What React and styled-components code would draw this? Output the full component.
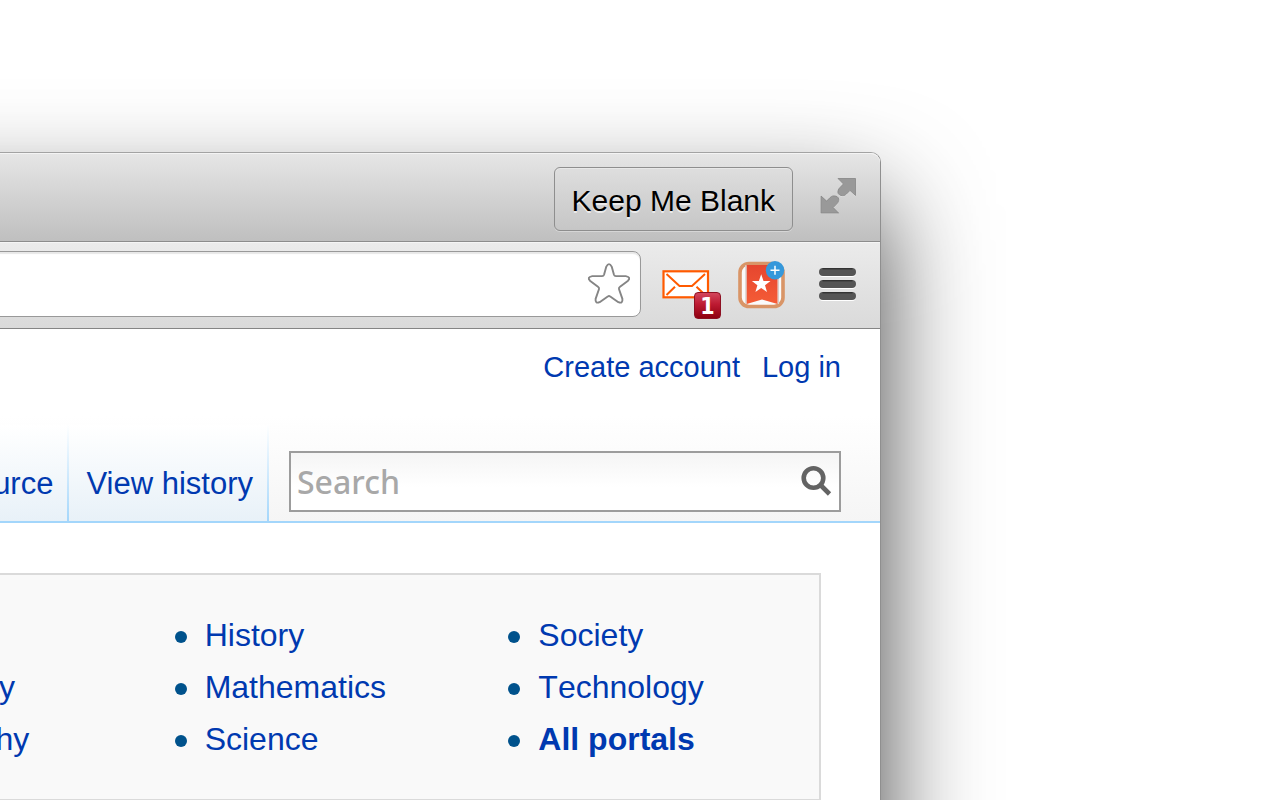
import React, { useState } from 'react'
import styled, { createGlobalStyle } from 'styled-components'

const GlobalStyle = createGlobalStyle`
    * { box-sizing: border-box; }
    body {
        margin: 0;
        background: #fff;
        font-family: "Liberation Sans", Arial, sans-serif;
    }
`
const Page = styled.div`
    display: flex;
    flex-direction: column;
    height: 100vh;
    padding-top: 152px;
    overflow: hidden;
`
// the window runs off the left and bottom edges of the page
const Window = styled.div`
    flex: 1 0 auto;
    margin: 0 399px -200px -224px;
    border: 1px solid #8f8f8f;
    border-top-color: #a3a3a3;
    border-radius: 10px 10px 0 0;
    background: #fff;
    box-shadow: 0 52px 104px rgba(0, 0, 0, 0.74);
`
const TitleBar = styled.header`
    display: flex;
    justify-content: flex-end;
    gap: 21px;
    height: 89px;
    padding: 14px 18px 0 0;
    border-bottom: 1px solid #8c8c8c;
    border-radius: 9px 9px 0 0;
    background: linear-gradient(#e6e6e6, #bfbfbf);
    box-shadow: inset 0 1px 0 #f4f4f4;
`
const TitleButton = styled.button`
    height: 64px;
    padding: 4px 17px 0;
    border: 1px solid #8e8e8e;
    border-radius: 6px;
    background: linear-gradient(#dedede, #c6c6c6);
    box-shadow: inset 0 1px 0 #e8e8e8, 0 1px 0 #d6d6d6;
    color: #000;
    font-family: inherit;
    font-size: 30px;
    text-shadow: 0 2px 0 rgba(255, 255, 255, 0.6);
`
const IconButton = styled.button`
    position: relative;
    width: 48px;
    height: 56px;
    padding: 0;
    border: 0;
    background: none;
    svg { display: block; width: 48px; height: 56px; }
`
const Toolbar = styled.div`
    display: flex;
    align-items: center;
    gap: 21px;
    height: 87px;
    padding: 0 18px 3px 0;
    border-bottom: 1px solid #858585;
    background: linear-gradient(#ebebeb, #dadada);
    box-shadow: inset 0 1px 0 #f5f5f5;
`
const Omnibox = styled.div`
    flex: 1;
    display: flex;
    align-items: center;
    height: 66px;
    padding-right: 9px;
    border: 1px solid #999;
    border-radius: 8px;
    background: #fff;
    box-shadow: inset 0 2px 1px #e8e8e8;
`
const Address = styled.input`
    flex: 1;
    border: 0;
    outline: none;
    background: none;
    font-size: 30px;
`
const Extensions = styled.div`
    display: flex;
    gap: 28px;
`
const Badge = styled.span`
    position: absolute;
    left: 32px;
    top: 36px;
    width: 27px;
    height: 27px;
    border: 1px solid #8d1022;
    border-radius: 4px;
    background: linear-gradient(#d2465c, #bd1a32 45%, #8f0010);
    color: #fff;
    font: bold 23px/26px "DejaVu Sans Condensed", "Noto Sans", sans-serif;
    text-align: center;
`
const SiteHead = styled.div`
    padding-top: 20px;
    border-bottom: 2px solid #a3d6fb;
    background: linear-gradient(#fff 45%, #f5f5f5);
`
const Account = styled.nav`
    display: flex;
    justify-content: flex-end;
    gap: 22px;
    padding-right: 39px;
`
const Link = styled.a`
    color: #0039b0;
    font-size: ${p => p.$size || 32}px;
    font-weight: ${p => (p.$bold ? 700 : 400)};
    font-kerning: ${p => (p.$size ? 'auto' : 'none')};
    line-height: 36px;
    text-decoration: none;
    white-space: nowrap;
`
const NavRow = styled.div`
    display: flex;
    justify-content: flex-end;
    align-items: flex-end;
    padding: 40px 39px 0 0;
`
const Tab = styled.div`
    display: flex;
    align-items: flex-end;
    height: 96px;
    padding: 0 14px 19px 17px;
    border-right: 2px solid;
    border-image: linear-gradient(#fff, #a3d6fb) 1;
    background: linear-gradient(#fff, #e8f1f8);
`
const SearchBox = styled.form`
    flex: 0 1 552px;
    display: flex;
    align-items: center;
    height: 61px;
    margin: 0 0 9px 20px;
    padding: 0 6px;
    border: 2px solid #9c9c9c;
    background: linear-gradient(#f5f5f5, #fff 60%);
`
const SearchInput = styled.input`
    flex: 1;
    min-width: 0;
    padding: 0;
    border: 0;
    outline: none;
    background: none;
    font: 500 32px/44px "Noto Sans", sans-serif;
    &::placeholder { color: #a8a8a8; opacity: 1; }
`
const SearchButton = styled.button`
    padding: 0;
    border: 0;
    background: none;
    svg { display: block; }
`
const Portals = styled.main`
    display: grid;
    grid-template-columns: repeat(3, 1fr);
    margin: 50px 59px 0 39px;
    padding: 34px 0;
    border: 2px solid #dadada;
    background: #f9f9f9;
`
const List = styled.ul`
    margin: 0;
    padding: 0 0 0 23px;
    list-style: none;
`
const Item = styled.li`
    display: flex;
    align-items: center;
    gap: 18px;
    height: 52px;
    &::before {
        content: '';
        width: 12px;
        height: 12px;
        margin-top: 4px;
        border-radius: 50%;
        background: #00528c;
    }
`

const columns = [
    ['Arts', 'Biography', 'Geography'],
    ['History', 'Mathematics', 'Science'],
    ['Society', 'Technology', 'All portals'],
]

const arrow = 'M24 11.5H41.5V28.5L36 23.5L32.5 27C31 28.7 29 29 27 28.5C24.5 28 23.5 26 24 24C24.2 22.5 25 21.5 26 20.5L29.4 17Z'

const ExpandIcon = () => (
    <svg viewBox="0 0 48 56">
        <g fill="#fff" opacity="0.5" transform="translate(0 1)">
            <path d={arrow} />
            <path d={arrow} transform="rotate(180 24.3 28.8)" />
        </g>
        <g fill="#999" stroke="#858585" strokeWidth="0.8">
            <path d={arrow} />
            <path d={arrow} transform="rotate(180 24.3 28.8)" />
        </g>
    </svg>
)
const StarIcon = () => (
    <svg width="44" height="44" viewBox="0 0 46 46" fill="none" stroke="#858585" strokeWidth="2" strokeLinejoin="round">
        <path d="M20.2 4.8Q23 -0.4 25.8 4.8L28.2 13.3Q28.7 14.8 30.2 14.8L40.5 14.8Q46.6 16 42.6 19.8L34.2 26.2Q33 27 33.5 28.5L37 38.6Q37.6 43.8 32.8 42L24.3 36Q23 35 21.7 36L13.2 42Q8.4 43.8 9 38.6L12.5 28.5Q13 27 11.8 26.2L3.4 19.8Q-0.6 16 5.5 14.8L15.8 14.8Q17.3 14.8 17.8 13.3Z" />
    </svg>
)
const MailIcon = () => (
    <svg viewBox="0 0 48 56" fill="none" stroke="#ff5a00">
        <rect x="1.5" y="15.3" width="44.5" height="26" fill="#fff" strokeWidth="2.2" />
        <path d="M4.5 18L17.5 30H30L43 18M4.5 39L13 30.7M43 39L34.5 30.7" strokeWidth="2" />
    </svg>
)
const BookmarkIcon = () => (
    <svg viewBox="0 0 48 56">
        <defs>
            <linearGradient id="ribbon" x1="0" y1="0" x2="0" y2="1">
                <stop offset="0" stopColor="#e5462f" />
                <stop offset="1" stopColor="#f55c36" />
            </linearGradient>
        </defs>
        <rect x="2" y="7.5" width="43" height="43" rx="9" fill="#fafafa" stroke="#d99567" strokeWidth="3.6" />
        <path d="M8 9V48M40.3 9V48" stroke="#d8cfca" strokeWidth="1.5" />
        <path d="M8.7 9H39.5V48L24 43.5L8.7 48Z" fill="url(#ribbon)" />
        <path d="M23.2 18.2L25.5 25H32.5L27 29.3L29 36L23.2 32L17.4 36L19.4 29.3L13.9 25H20.9Z" fill="#fff" />
        <circle cx="37" cy="14.3" r="9.2" fill="#3598db" />
        <path d="M32.5 14.3H41.5M37 9.8V18.8" stroke="#fff" strokeWidth="1.5" />
    </svg>
)
const MenuIcon = () => (
    <svg viewBox="0 0 48 56">
        {[12, 24, 36].map(y => (
            <g key={y}>
                <rect x="5" y={y + 1} width="37" height="8" rx="4" fill="#fff" />
                <rect x="5" y={y} width="37" height="8" rx="4" fill="#555" />
                <path d={`M8.5 ${y + 0.7}H38.5`} stroke="#333" strokeWidth="1.4" />
            </g>
        ))}
    </svg>
)

export default function App() {
    const [ query, setQuery ] = useState('')
    return (
        <Page>
            <GlobalStyle />
            <Window>
                <TitleBar>
                    <TitleButton type="button">Keep Me Blank</TitleButton>
                    <IconButton type="button" aria-label="Full screen"><ExpandIcon /></IconButton>
                </TitleBar>
                <Toolbar>
                    <Omnibox>
                        <Address type="text" aria-label="Address" />
                        <SearchButton type="button" aria-label="Bookmark this page"><StarIcon /></SearchButton>
                    </Omnibox>
                    <Extensions>
                        <IconButton type="button" aria-label="Mail">
                            <MailIcon />
                            <Badge>1</Badge>
                        </IconButton>
                        <IconButton type="button" aria-label="Add to list"><BookmarkIcon /></IconButton>
                        <IconButton type="button" aria-label="Menu"><MenuIcon /></IconButton>
                    </Extensions>
                </Toolbar>
                <SiteHead>
                    <Account>
                        <Link href="#create" $size={29}>Create account</Link>
                        <Link href="#login" $size={29}>Log in</Link>
                    </Account>
                    <NavRow>
                        <Tab><Link href="#source" $size={31}>View source</Link></Tab>
                        <Tab><Link href="#history" $size={31}>View history</Link></Tab>
                        <SearchBox onSubmit={e => e.preventDefault()}>
                            <SearchInput
                                type="text"
                                aria-label="Search"
                                placeholder="Search"
                                value={query}
                                onChange={e => setQuery(e.target.value)}
                            />
                            <SearchButton type="submit" aria-label="Go">
                                <svg width="32" height="34" viewBox="0 0 32 34" fill="none" stroke="#636363">
                                    <circle cx="12.5" cy="13" r="9.8" strokeWidth="4.6" />
                                    <path d="M19.5 20L28.5 29" strokeWidth="4.6" />
                                </svg>
                            </SearchButton>
                        </SearchBox>
                    </NavRow>
                </SiteHead>
                <Portals>
                    {columns.map((names, i) => (
                        <List key={i}>
                            {names.map(name => (
                                <Item key={name}>
                                    <Link href="#portal" $bold={name === 'All portals'}>{name}</Link>
                                </Item>
                            ))}
                        </List>
                    ))}
                </Portals>
            </Window>
        </Page>
    )
}
